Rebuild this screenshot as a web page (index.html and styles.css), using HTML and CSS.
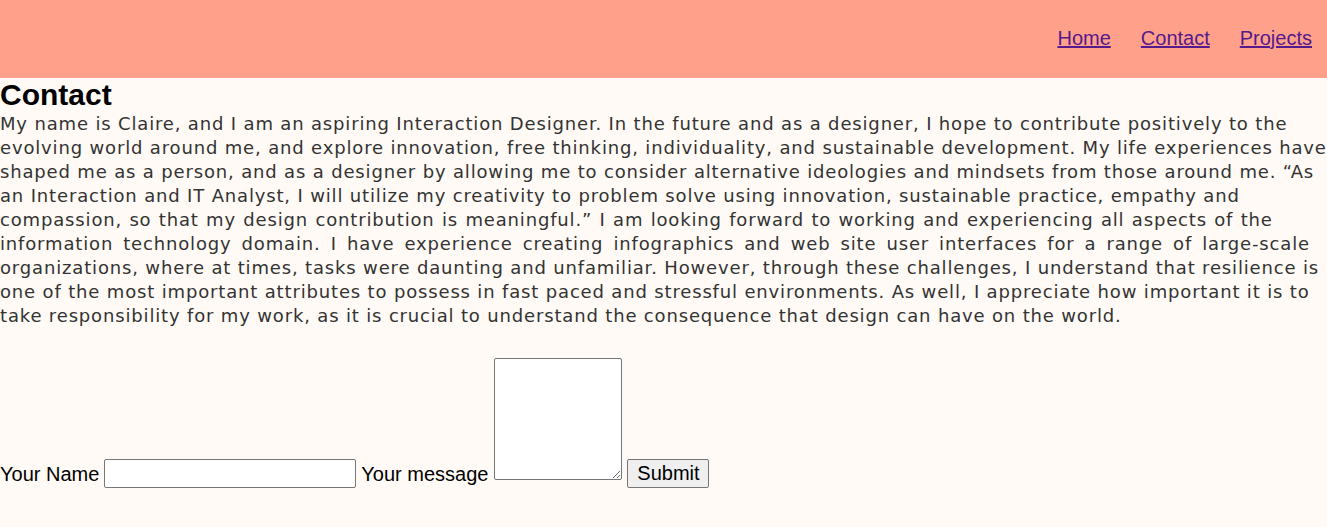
FILE: index.html
```html
<!DOCTYPE html>
<html lang="en">
<head>
<meta charset="utf-8">
<title>Contact</title>
<link rel="stylesheet" href="styles.css">
</head>
<body>
<header class="site-header">
  <nav class="nav">
    <a class="nav-link" href="#">Home</a>
    <a class="nav-link" href="#">Contact</a>
    <a class="nav-link" href="#">Projects</a>
  </nav>
</header>
<main>
  <h2 class="title">Contact</h2>
  <p class="bio">My name is Claire, and I am an aspiring Interaction Designer. In the future and as a designer, I hope to contribute positively to the<br>evolving world around me, and explore innovation, free thinking, individuality, and sustainable development. My life experiences have<br>shaped me as a person, and as a designer by allowing me to consider alternative ideologies and mindsets from those around me. “As<br>an Interaction and IT Analyst, I will utilize my creativity to problem solve using innovation, sustainable practice, empathy and<br><span class="wide-a">compassion, so that my design contribution is meaningful.” I am looking forward to working and experiencing all aspects of the</span><br><span class="wide-b">information technology domain. I have experience creating infographics and web site user interfaces for a range of large-scale</span><br>organizations, where at times, tasks were daunting and unfamiliar. However, through these challenges, I understand that resilience is<br>one of the most important attributes to possess in fast paced and stressful environments. As well, I appreciate how important it is to<br>take responsibility for my work, as it is crucial to understand the consequence that design can have on the world.</p>
  <form class="contact-form">
    <label class="label" for="name">Your Name</label>
    <input class="name-input" id="name" type="text">
    <label class="label" for="msg">Your message</label>
    <textarea class="msg-input" id="msg"></textarea>
    <button class="submit" type="button">Submit</button>
  </form>
</main>
</body>
</html>
```
FILE: styles.css
```css
html, body {
  margin: 0;
  padding: 0;
  overflow: hidden;
}
body {
  background: #fffaf5;
  font-family: "Liberation Sans", Arial, sans-serif;
  font-size: 20px;
  color: #000;
}
.site-header {
  box-sizing: border-box;
  height: 78px;
  background: #ffa08a;
  display: flex;
  align-items: center;
  justify-content: flex-end;
  padding: 0 15px 2px 0;
}
.nav {
  display: flex;
  gap: 30px;
}
.nav-link {
  color: #551a8b;
  text-decoration: underline;
  font-size: 20px;
}
.title {
  margin: 0;
  font-size: 30px;
  font-weight: bold;
}
.bio {
  margin: 0;
  font-family: "DejaVu Sans", sans-serif;
  font-size: 18px;
  letter-spacing: 0.84px;
  line-height: 24px;
  color: #333;
  white-space: nowrap;
}
.wide-a {
  word-spacing: 0.8px;
}
.wide-b {
  word-spacing: 3.5px;
}
.contact-form {
  margin-top: 30px;
  display: flex;
  align-items: flex-end;
  gap: 5px;
}
.label {
  line-height: 23px;
  margin-bottom: 2px;
}
.name-input {
  box-sizing: border-box;
  width: 252px;
  height: 29px;
  margin: 0;
  font-size: 20px;
  border: 1px solid #767676;
  border-radius: 2px;
  background: #fff;
}
.msg-input {
  box-sizing: border-box;
  width: 128px;
  height: 122px;
  margin: 0 0 8px 1px;
  border: 1px solid #767676;
  border-radius: 2px;
  background: #fff;
}
.submit {
  box-sizing: border-box;
  height: 29px;
  width: 82px;
  margin: 0;
  font-family: "Liberation Sans", Arial, sans-serif;
  font-size: 20px;
  padding: 0 6px;
  background: #efefef;
  border: 1px solid #767676;
  border-radius: 2px;
  color: #000;
}
```
